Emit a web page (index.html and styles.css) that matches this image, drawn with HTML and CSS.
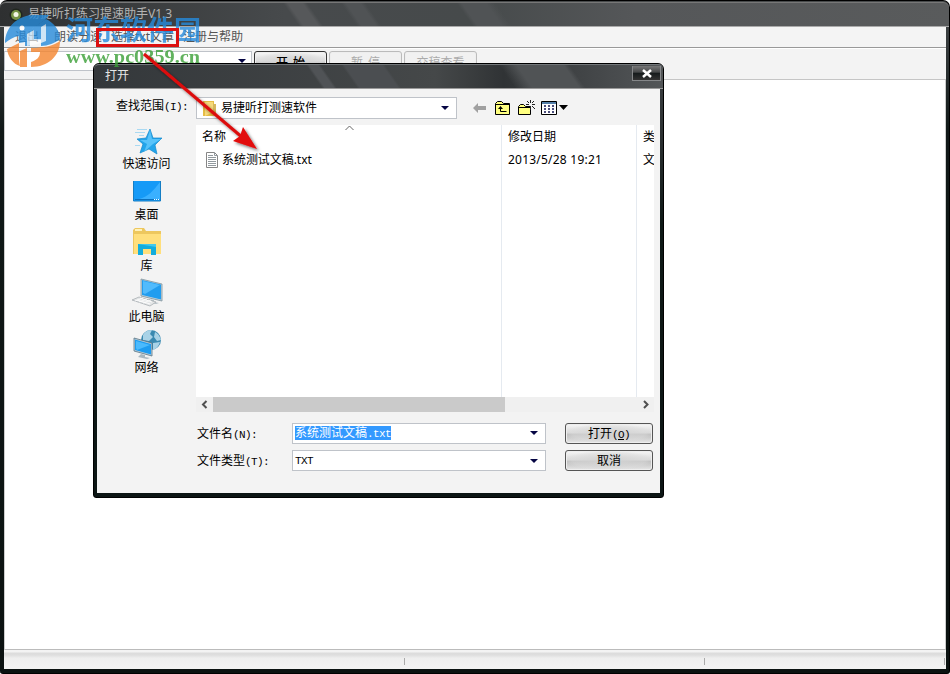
FILE: index.html
```html
<!DOCTYPE html>
<html lang="zh-CN">
<head>
<meta charset="utf-8">
<title>易捷听打练习提速助手V1.3</title>
<link rel="stylesheet" href="styles.css">
</head>
<body>
<main class="window">
  <header class="titlebar">
    <svg class="app-icon" width="14" height="14" viewBox="0 0 14 14"><circle cx="7" cy="7" r="6.5" fill="#20261e"/><circle cx="7" cy="7" r="5" fill="#759344"/><circle cx="7" cy="6.500" r="2.500" fill="#f3f7e4"/></svg>
    <span>易捷听打练习提速助手V1.3</span>
  </header>
  <nav class="menubar"><span>退出</span><span>朗读分速</span><span>选择txt文章</span><span>注册与帮助</span></nav>
  <section class="toolbar">
    <div class="combo speed"><i class="caret"></i></div>
    <button class="btn tool strong">开 始</button>
    <button class="btn tool off">暂 停</button>
    <button class="btn tool off">交稿查看</button>
  </section>
  <section class="paper"></section>
  <footer class="status"><span></span><span></span><span></span></footer>
</main>

<section class="dialog">
  <header class="dialog-title"><span>打开</span><button class="close"><svg width="12" height="9" viewBox="0 0 12 9"><path d="M2 1l8 7M10 1L2 8" stroke="#fff" stroke-width="2.5"/></svg></button></header>
  <div class="dialog-body">
    <div class="lookup">
      <label>查找范围<b class="mono">(I):</b></label>
      <div class="combo folder-select">
        <svg width="14" height="17" viewBox="0 0 14 17"><path d="M0 1h11v3h2v12H0z" fill="#e6bd45"/><path d="M2 2h8v10l-8 4z" fill="#f6da7c"/><path d="M10 4h3v12h-3z" fill="#d5b85f"/></svg>
        <span>易捷听打测速软件</span><i class="caret"></i>
      </div>
      <div class="actions">
        <svg width="13" height="16" viewBox="0 0 13 16"><path d="M0 8l5-5v3h8v4H5v3z" fill="#a0a0a0"/></svg>
        <svg width="16" height="16" viewBox="0 0 16 16"><path d="M.5 14.500v-11l2-2h4l2 2h6v11z" fill="#ffff80" stroke="#000"/><path d="M1 4.500h13M5.500 7v4.500h6" fill="none" stroke="#000"/><path d="M3 9l2.500-3L8 9z"/></svg>
        <svg width="17" height="16" viewBox="0 0 17 16"><path d="M.5 14.500v-8l2-2h3l2 2h5v8z" fill="#ffff80" stroke="#000"/><path d="M1 7.500h11" stroke="#000"/><path d="M12.500 0v3M12.500 6v4M8 4.500h3M14 4.500h3M9 1l2 2M16 1l-2 2M14 6l3 3" stroke="#222"/></svg>
        <svg width="27" height="16" viewBox="0 0 27 16"><path d="M.5 1.500h15v13H.5z" fill="#fff" stroke="#000"/><path d="M1 2h14v2H1z" fill="#547fa9"/><path d="M3 6h2m2 0h2m2 0h2M3 9h2m2 0h2m2 0h2M3 12h2m2 0h2m2 0h2" stroke="#111452" stroke-width="1.500"/><path d="M18 5h9l-4.500 5z"/></svg>
      </div>
    </div>
    <div class="browser">
      <aside class="places">
        <div class="place"><svg width="32" height="32" viewBox="0 0 32 32"><path d="M19 4l3 9 9 0-7 7 2 9-8-5-9 4 3-9-6-5 9-1z" fill="#23a5eb" stroke="#1588ca" stroke-width=".7"/><path d="M19 5l2 9 9 0-8 5-9 8 3-8-7-4h7z" fill="#58c3fa"/><path d="M6 4.500h10M4 7.500h10M8 10.500h5M4 20.500h5" stroke="#a9d9f2" stroke-width="1"/></svg><span>快速访问</span></div>
        <div class="place"><svg width="32" height="32" viewBox="0 0 32 32"><path d="M2 5h28v20H2z" fill="#159af7"/><path d="M29 6v17H8c9-2 14-8 21-17z" fill="#3ab0ff"/><path d="M2.500 5v20h27V5" fill="none" stroke="#147dc4"/><path d="M4 23.500h20" stroke="#0b70bd"/><path d="M23 23.500h6" stroke="#fff" stroke-dasharray="1 1"/></svg><span>桌面</span></div>
        <div class="place"><svg width="32" height="32" viewBox="0 0 32 32"><path d="M2 3l2-2h9l2 3h15v23H2z" fill="#edc75e"/><path d="M3 7h27v20H3z" fill="#ffdf7c"/><path d="M4 2h7v2H4z" fill="#fff2bb"/><path d="M7 28V17h18v11h-5v-6h-8v6z" fill="#13addd"/><path d="M7 17h18v3z" fill="#42c9ed"/></svg><span>库</span></div>
        <div class="place"><svg width="32" height="32" viewBox="0 0 32 32"><path d="M10 1l21 5v17l-21-5z" fill="#c6d4da" stroke="#7e929d" stroke-width=".8"/><path d="M11 2l19 4.500v15l-19-4.500z" fill="#229def"/><path d="M12 3l17 4-15 9-2-1z" fill="#51bbfd"/><path d="M18 21l5 1v2l5 1-3 1-9-2z" fill="#b5c0c6"/><path d="M1 22l7-3 17 5-6 4z" fill="#e4e6e7" stroke="#a8afb3" stroke-width=".8"/><path d="M6 22l13 4M9 20l12 4M4 23l8-3m-4 4l8-3m-4 4l8-3" stroke="#fff" stroke-width=".8"/></svg><span>此电脑</span></div>
        <div class="place"><svg width="32" height="32" viewBox="0 0 32 32"><circle cx="20" cy="11" r="10" fill="#3989b0"/><path d="M12 6c2-4 6-5 9-5l-2 4 3 3-4 4-6-1zM24 3c4 2 5 5 6 8l-4 1-3-4zM22 14l7-1c-1 4-4 7-7 8z" fill="#a8d2e6"/><path d="M3 9l18 5v13L3 22z" fill="#bdced7" stroke="#577485" stroke-width=".8"/><path d="M4 10.500l16 4.500v10.500L4 21z" fill="#1d9cf0"/><path d="M5 12l14 4-13 5-1-2z" fill="#4abafd"/><path d="M10 25l4 1v2l5 1-3 1-9-2z" fill="#a9b7bf"/></svg><span>网络</span></div>
      </aside>
      <div class="list">
        <div class="columns">
          <div class="column name"><span class="head">名称</span><span class="file"><svg width="13" height="16" viewBox="0 0 13 16"><path d="M.5.500h8l3 3v12H.5z" fill="#fff" stroke="#868686"/><path d="M8.500.500v3h3M2 3.500h5M2 5.500h8M2 7.500h8M2 9.500h8M2 11.500h8M2 13.500h8" stroke="#91999e" fill="none"/></svg>系统测试文稿.txt</span><svg class="sort" width="9" height="6" viewBox="0 0 9 6"><path d="M.5 5l4-4 4 4" fill="none" stroke="#666"/></svg></div>
          <div class="column date"><span class="head">修改日期</span><span class="file stamp">2013/5/28 19:21</span></div>
          <div class="column type"><span class="head">类</span><span class="file">文</span></div>
        </div>
        <div class="scroll"><svg width="17" height="15" viewBox="0 0 17 15"><path d="M10.500 4L7 7.500l3.500 3.500" fill="none" stroke="#505050" stroke-width="2"/></svg><i class="thumb"></i><svg width="17" height="15" viewBox="0 0 17 15"><path d="M7 4l3.500 3.500L7 11" fill="none" stroke="#505050" stroke-width="2"/></svg></div>
      </div>
    </div>
    <div class="fields">
      <label>文件名<b class="mono">(N):</b></label><div class="combo"><span class="selected">系统测试文稿<b class="mono">.txt</b></span><i class="caret"></i></div><button class="btn">打开<b class="mono">(<u>O</u>)</b></button>
      <label>文件类型<b class="mono">(T):</b></label><div class="combo"><span class="mono">TXT</span><i class="caret"></i></div><button class="btn">取消</button>
    </div>
  </div>
</section>

<svg class="annotations" width="270" height="170" viewBox="0 0 270 170">
  <defs><filter id="shade" x="-20%" y="-20%" width="150%" height="150%"><feDropShadow dx="2" dy="2" stdDeviation="1.500" flood-opacity=".5"/></filter></defs>
  <g class="watermark">
    <path d="M5 43C5 27 18 15 34 15h15l-4 5-20 14v8l-6 1v-7C13 37 9 40 5 43z" fill="#268bdb"/>
    <path d="M25 33l21-14c8 4 13 10 14 20-5 4-12 7-19 7v-6H30v6h-5z" fill="#268bdb"/>
    <path d="M27 34l7-4v9h7V27l5-3v17c-7 3-12 4-19 5z" fill="#fff" opacity=".75"/>
    <circle cx="22" cy="28" r="2.500" fill="#fff"/>
    <path d="M7 49l12-6v12c0 4 0 8 1 11C13 64 8 57 7 49zM20 51l7-3v19h-7z" fill="#f4852f"/>
    <path d="M31 48c12 0 22-2 29-7 0 15-12 26-29 26v-5c6-2 9-5 9-10h-9z" fill="#f4852f"/>
    <text class="mark-name" x="66" y="40" textLength="135" lengthAdjust="spacingAndGlyphs">河东软件园</text>
    <text class="mark-url" x="66" y="63" textLength="134" lengthAdjust="spacingAndGlyphs">www.pc0359.cn</text>
  </g>
  <rect x="97.500" y="29.500" width="80" height="16" fill="none" stroke="#dc1010" stroke-width="3"/>
  <g filter="url(#shade)"><path d="M144 54l99 84" stroke="#dc0b0b" stroke-width="3"/><path d="M257 149l-24-8 7-5 3-9z" fill="#e20b0b"/></g>
</svg>
</body>
</html>
```

FILE: styles.css
```css
* { box-sizing: border-box; }
body { margin: 0; width: 950px; height: 674px; overflow: hidden; background: #fff; font: 12px/16px "Noto Sans", "Noto Sans CJK SC", sans-serif; color: #000; }
button { font: inherit; color: inherit; padding: 0; }
svg { display: block; flex: none; }
.mono { font: 11px/14px "Liberation Mono", monospace; letter-spacing: -.6px; }

.window { height: 674px; display: flex; flex-direction: column; padding: 1px 3px 4px 4px; border-radius: 7px 7px 3px 3px; background: linear-gradient(#474a4b, #303536 55px, #101817 130px, #0b1211); border: solid #000; border-width: 1px 1px 1px 0; }
.titlebar { height: 25px; flex: none; margin: 0 -3px 0 -4px; padding-left: 9px; display: flex; align-items: center; gap: 5px; color: #b4b4b4; border-top: 1px solid #777; border-bottom: 1px solid #aaa; border-radius: 6px 6px 0 0; background: linear-gradient(55deg, transparent 31%, #56585a 31.500%, #56585a 33%, transparent 33.500% 37%, #505355 37.500% 39%, transparent 39.500% 49%, #505355 49.500% 52%, transparent 53%), linear-gradient(90deg, #2e3031, #474a4c 30%, #464a4b 50%, #555759 67%, #595b5c); }
.titlebar span { position: relative; top: -1px; }
.menubar { height: 21px; flex: none; display: flex; align-items: center; padding-left: 11px; gap: 15px; background: #f4f4f4; border-bottom: 1px solid #999; color: #555; }
.menubar span { white-space: nowrap; }
.menubar span:nth-child(2) { margin-right: -6px; }
.menubar span:nth-child(3) { margin-right: -6px; }
.toolbar { height: 32px; flex: none; display: flex; align-items: flex-start; gap: 2px; padding-top: 2px; background: #f3f3f3; border-top: 1px solid #fff; border-bottom: 1px solid #c5c5c5; }
.paper { flex: 1; background: #fff; border-left: 1px solid #ccc; border-right: 1px solid #ccc; border-bottom: 1px solid #bbb; }
.status { height: 19px; flex: none; display: grid; grid-template-columns: 401px 300px 240px; background: linear-gradient(#f3f3f3 2px, #dcdcdc 3px, #dedede 5px, #eee 8px, #f3f3f3); align-items: center; padding-top: 3px; }
.status span { height: 7px; border-right: 1px solid #aaa; }
.combo { height: 22px; background: #fff; border: 1px solid #bfc3c9; display: flex; align-items: center; white-space: nowrap; }
.caret { margin-left: auto; border: 4px solid transparent; border-top-color: #050543; border-bottom: 0; }
.speed { width: 248px; height: 20px; padding-right: 5px; }
.btn { height: 21px; border: 1px solid #555; border-radius: 3px; background: radial-gradient(ellipse at center, #d2d2d2 0, rgba(220,220,220,.5) 60%, transparent 75%), linear-gradient(#f7f7f7, #dadada 45%, #bcbcbc 55%, #e7e7e7); box-shadow: inset 0 0 0 1px #eee; line-height: 17px; }
.tool { width: 73px; height: 22px; word-spacing: 2px; }
.tool.off { border-color: #bbb; background: #f1f1f1; color: #aaa; }
.strong { font-weight: 500; border-color: #333; }

.dialog { position: absolute; left: 93px; top: 63px; width: 571px; height: 435px; border: 1px solid #000; border-radius: 6px 6px 3px 3px; background: linear-gradient(#3e4245, #292e2f 80px, #0d1816 160px, #0c1514); padding: 0 3px 4px 3px; display: flex; flex-direction: column; }
.dialog-title { height: 25px; flex: none; margin: 0 -3px; padding: 0 2px 0 11px; display: flex; justify-content: space-between; border-top: 1px solid #73777a; border-bottom: 1px solid #999; border-radius: 5px 5px 0 0; color: #e6e6e6; background: linear-gradient(55deg, transparent 39%, #505356 39.500% 41%, transparent 41.500% 45%, #4b4e51 45.500% 52%, transparent 52.500% 72%, #505355 75% 83%, transparent 84%), linear-gradient(90deg, #34383b, #454849 60%, #303335 72%, #535658); line-height: 21px; }
.close { width: 29px; height: 15px; margin-top: 1px; border: 1px solid #858789; border-top: 0; background: linear-gradient(#777, #454748 45%, #151a1b 50%, #333); display: grid; place-items: center; }
.dialog-body { flex: 1; background: #f3f3f3; display: flex; flex-direction: column; }
.lookup { height: 36px; flex: none; display: grid; grid-template-columns: 80px 261px auto; padding: 8px 0 0 19px; }
.lookup label { line-height: 18px; }
.folder-select { padding: 0 7px 0 6px; gap: 4px; }
.actions { display: flex; padding: 3px 0 0 16px; }
.actions svg:nth-child(2) { margin-left: 9px; }
.actions svg:nth-child(3) { margin-left: 7px; }
.actions svg:nth-child(4) { margin-left: 6px; }
.browser { display: grid; grid-template-columns: 99px 458px; height: 287px; }
.places { display: flex; flex-direction: column; }
.place { height: 51px; display: flex; flex-direction: column; align-items: center; }
.place span { line-height: 16px; margin-top: -1px; }
.list { display: flex; flex-direction: column; }
.columns { display: grid; grid-template-columns: 306px 135px 17px; height: 272px; background: #fff; overflow: hidden; }
.column { display: flex; flex-direction: column; padding: 4px 0 0 6px; border-right: 1px solid #e5eaf0; white-space: nowrap; position: relative; }
.column.type { padding-left: 6px; border: 0; }
.file { display: flex; align-items: center; gap: 3px; margin-top: 7px; }
.name .file { padding-left: 4px; letter-spacing: -.05px; }
.stamp { letter-spacing: .22px; }
.sort { position: absolute; left: 149px; top: 0; }
.scroll { height: 15px; display: flex; background: #f0f0f0; }
.thumb { width: 292px; margin-right: 132px; background: #cacaca; }
.fields { display: grid; grid-template-columns: 95px 254px 88px; grid-template-rows: 22px 21px; row-gap: 6px; padding: 10px 0 0 100px; align-items: center; }
.fields label:first-child { padding-top: 2px; }
.fields .combo { height: 21px; padding: 0 7px 0 2px; }
.fields .btn { margin-left: 19px; width: 88px; }
.selected { background: #3399ff; color: #fff; line-height: 14px; height: 14px; }
b.mono { font-weight: 400; }
.mono u { text-underline-offset: 1px; }

.annotations { position: absolute; left: 0; top: 0; pointer-events: none; }
.watermark { opacity: .8; }
.mark-name { font: 700 27px "Noto Sans CJK SC", sans-serif; fill: #268bdd; }
.mark-url { font: 700 19px "Liberation Serif", serif; fill: #3a9f37; }
```
